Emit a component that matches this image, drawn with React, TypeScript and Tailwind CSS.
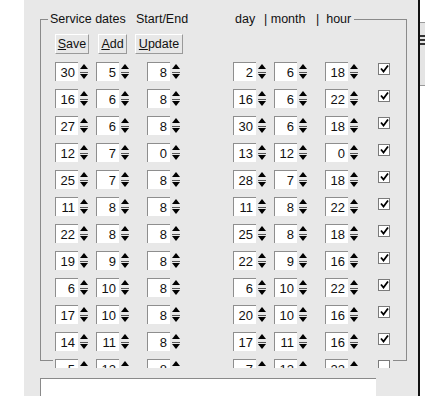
const rows: [number, number, number, number, number, number, boolean][] = [
  [30, 5, 8, 2, 6, 18, true],
  [16, 6, 8, 16, 6, 22, true],
  [27, 6, 8, 30, 6, 18, true],
  [12, 7, 0, 13, 12, 0, true],
  [25, 7, 8, 28, 7, 18, true],
  [11, 8, 8, 11, 8, 22, true],
  [22, 8, 8, 25, 8, 18, true],
  [19, 9, 8, 22, 9, 16, true],
  [6, 10, 8, 6, 10, 22, true],
  [17, 10, 8, 20, 10, 16, true],
  [14, 11, 8, 17, 11, 16, true],
  [5, 12, 8, 7, 12, 22, false],
];

const Spinner = ({ value, className = "" }: { value: number; className?: string }) => (
  <div className={`flex h-[19px] w-[34px] shrink-0 ${className}`}>
    <div className="flex w-[23px] items-center justify-end border-l border-t border-[#8e8e8e] bg-white pr-[3px] text-[13px] leading-none text-[#111]">
      {value}
    </div>
    <div className="flex w-[11px] flex-col items-center pt-[2px]">
      <svg width="8" height="5" viewBox="0 0 8 5">
        <path d="M4 0 L8 5 L0 5 Z" fill="#000" />
      </svg>
      <div className="mt-[3px] h-[1px] w-[8px] bg-[#555]" />
      <svg className="mt-[1px]" width="8" height="5" viewBox="0 0 8 5">
        <path d="M0 0 L8 0 L4 5 Z" fill="#000" />
      </svg>
    </div>
  </div>
);

const Check = ({ on }: { on: boolean }) => (
  <div className="ml-[19px] mt-[1px] flex h-[12px] w-[12px] shrink-0 items-center justify-center border border-[#7a7a7a] bg-white">
    {on && (
      <svg width="9" height="8" viewBox="0 0 9 8">
        <path d="M1 3.5 L3.5 6.5 L8 0.5" stroke="#000" strokeWidth="1.8" fill="none" />
      </svg>
    )}
  </div>
);

const Btn = ({ first, rest, w, className = "" }: { first: string; rest: string; w: string; className?: string }) => (
  <button
    className={`flex h-[20px] ${w} items-center justify-center border border-b-[#9a9a9a] border-l-white border-r-[#9a9a9a] border-t-white bg-[#e8e8e8] text-[12.5px] leading-none text-[#111] ${className}`}
  >
    <span className="underline">{first}</span>
    {rest}
  </button>
);

export default function App() {
  return (
    <div className="flex h-[396px] w-[425px] overflow-hidden bg-white font-['Liberation_Sans',Arial,sans-serif]">
      <div className="w-[24px] shrink-0 bg-white" />

      <div className="w-[394px] shrink-0 bg-[#e8e8e8] pl-[16px] pt-[12px]">
        <fieldset className="w-[367px] border border-[#8a8a8a]">
          <legend className="ml-[7px] whitespace-nowrap px-[2px] text-[12.5px] leading-[14px] text-[#111]">
            <span className="inline-block w-[86px]">Service dates</span>
            <span className="inline-block w-[99px]">Start/End</span>
            <span className="inline-block w-[29px]">day</span>
            <span className="inline-block w-[52px]">| month</span>
            <span className="inline-block w-[36px]">|&nbsp; hour</span>
          </legend>

          <div className="ml-[14px] mt-[8px] flex">
            <Btn first="S" rest="ave" w="w-[34px]" />
            <Btn first="A" rest="dd" w="w-[29px]" className="ml-[9px]" />
            <Btn first="U" rest="pdate" w="w-[48px]" className="ml-[8px]" />
          </div>

          <div className="relative z-10 -mb-[8px] ml-[12px] mt-[8px] flex h-[306px] w-[340px] flex-col gap-[8px] overflow-hidden bg-[#e8e8e8] pl-[2px]">
            {rows.map((r, i) => (
              <div key={i} className="flex shrink-0 items-start">
                <Spinner value={r[0]} />
                <Spinner value={r[1]} className="ml-[7px]" />
                <Spinner value={r[2]} className="ml-[17px]" />
                <Spinner value={r[3]} className="ml-[52px]" />
                <Spinner value={r[4]} className="ml-[7px]" />
                <Spinner value={r[5]} className="ml-[17px]" />
                <Check on={r[6]} />
              </div>
            ))}
          </div>
        </fieldset>

        <div className="mt-[17px] h-[40px] w-[336px] border-l border-t border-[#8a8a8a] bg-white" />
      </div>

      <div className="w-[2px] shrink-0 bg-[#111]" />

      <div className="flex-1 bg-white">
        <div className="h-[64px] border-b border-[#9a9a9a] bg-[#e4e4e4]">
          <div className="mt-[22px] h-[1px] bg-[#9a9a9a]" />
          <div className="mt-[12px] flex flex-col gap-[2px]">
            <div className="h-[2px] bg-[#333]" />
            <div className="h-[2px] bg-[#333]" />
            <div className="h-[2px] bg-[#333]" />
          </div>
        </div>
      </div>
    </div>
  );
}
